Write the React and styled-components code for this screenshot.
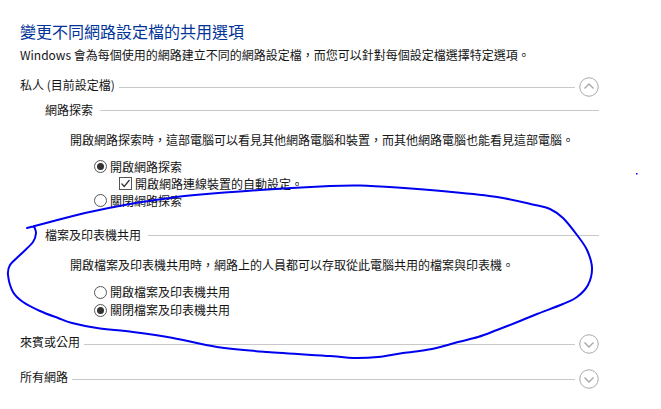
import React from "react";
import styled, { createGlobalStyle } from "styled-components";

const Global = createGlobalStyle`
  html, body { margin: 0; padding: 0; background: #fff; }
  body { font-family: "Noto Sans CJK TC", "Noto Sans", sans-serif; color: #141414; }
`;

const Page = styled.main`
  position: relative;
  width: 661px;
  height: 409px;
  overflow: hidden;
  box-sizing: border-box;
  padding: 20px 62px 0 20px;
  display: flex;
  flex-direction: column;
  font-size: 12px;
`;

const Title = styled.h1`
  margin: 0;
  height: 22px;
  font-size: 16px;
  line-height: 22px;
  font-weight: 400;
  color: #003399;
`;

const Intro = styled.p`
  margin: 4px 0 0;
  height: 18px;
  line-height: 18px;
  white-space: nowrap;
`;

const Header = styled.div`
  display: flex;
  align-items: center;
  height: 20px;
  margin-top: ${p => p.$top || 0}px;
  margin-left: ${p => p.$indent || 0}px;
  gap: ${p => p.$gap}px;
  white-space: nowrap;
`;

const HeaderLabel = styled.span`
  padding-bottom: ${p => p.$lift * 2}px;
`;

const Rule = styled.span`
  flex: 1;
  height: 1px;
  background: #c8c8c8;
`;

const Toggle = styled.svg`
  width: 20px;
  height: 20px;
  flex: none;
`;

const Body = styled.p`
  margin: ${p => p.$top}px 0 0 50px;
  height: 18px;
  line-height: 18px;
  white-space: nowrap;
`;

const Options = styled.div`
  display: flex;
  flex-direction: column;
  margin: ${p => p.$top}px 0 0 74px;
`;

const Option = styled.label`
  display: flex;
  align-items: center;
  gap: 3px;
  height: ${p => p.$height}px;
  line-height: 18px;
  margin-left: ${p => p.$indent || 0}px;
  white-space: nowrap;
`;

const RadioDot = styled.span`
  box-sizing: border-box;
  width: 13px;
  height: 13px;
  border-radius: 50%;
  border: 1px solid #555;
  background: #fff;
  flex: none;
  display: flex;
  align-items: center;
  justify-content: center;
  &::after {
    content: "";
    display: ${p => (p.$on ? "block" : "none")};
    width: 7px;
    height: 7px;
    border-radius: 50%;
    background: #333;
  }
`;

const CheckBox = styled.svg`
  width: 13px;
  height: 13px;
  flex: none;
`;

const Ink = styled.svg`
  position: absolute;
  left: 0;
  top: 0;
  width: 661px;
  height: 409px;
  pointer-events: none;
`;

const Chevron = ({ up }) => (
  <Toggle viewBox="0 0 20 20">
    <circle cx="10" cy="10" r="9.25" fill="#fff" stroke="#a8a8a8" strokeWidth="1" />
    <path d={up ? "M5.5 11.5 10 7l4.5 4.5" : "M5.5 8.5 10 13l4.5-4.5"} fill="none" stroke="#a8a8a8" strokeWidth="1.4" />
  </Toggle>
);

const Radio = ({ on, height, children }) => (
  <Option $height={height}>
    <RadioDot $on={on} />
    <span>{children}</span>
  </Option>
);

const stroke = [
  [27, 228], [50, 222], [85, 213], [130, 204], [170, 198], [195, 195], [260, 190], [330, 186],
  [360, 185.5], [397, 187.5], [447, 191.5], [497, 197], [535, 205], [550, 209], [563, 218],
  [577, 235], [587, 250], [592, 268], [588, 285], [577, 297], [563, 304], [537, 314], [520, 321],
  [497, 330], [478, 337], [458, 342], [432, 349], [403, 353], [378, 357], [353, 358], [330, 356],
  [267, 352], [217, 347], [173, 338], [133, 332], [97, 328], [72, 323], [58, 318], [40, 311],
  [23, 302], [13, 292], [8, 275], [10, 265], [20, 255], [33, 242], [36, 233], [34, 226],
];

const smoothPath = pts =>
  pts.reduce((d, p, i) => {
    if (i === 0) return `M${p[0]} ${p[1]}`;
    const a = pts[Math.max(i - 2, 0)];
    const b = pts[i - 1];
    const c = pts[Math.min(i + 1, pts.length - 1)];
    const c1 = [b[0] + (p[0] - a[0]) / 6, b[1] + (p[1] - a[1]) / 6];
    const c2 = [p[0] - (c[0] - b[0]) / 6, p[1] - (c[1] - b[1]) / 6];
    return `${d} C${c1[0]} ${c1[1]} ${c2[0]} ${c2[1]} ${p[0]} ${p[1]}`;
  }, "");

export default function App() {
  return (
    <Page>
      <Global />
      <Title>變更不同網路設定檔的共用選項</Title>
      <Intro>Windows 會為每個使用的網路建立不同的網路設定檔，而您可以針對每個設定檔選擇特定選項。</Intro>

      <Header $top={13} $gap={4}>
        <HeaderLabel $lift={3}>私人 (目前設定檔)</HeaderLabel>
        <Rule />
        <Chevron up />
      </Header>

      <Header $top={3} $indent={25} $gap={7}>
        <HeaderLabel $lift={1}>網路探索</HeaderLabel>
        <Rule />
      </Header>
      <Body $top={11}>開啟網路探索時，這部電腦可以看見其他網路電腦和裝置，而其他網路電腦也能看見這部電腦。</Body>
      <Options $top={9}>
        <Radio on height={17}>開啟網路探索</Radio>
        <Option $indent={25} $height={17}>
          <CheckBox viewBox="0 0 13 13">
            <rect x=".5" y=".5" width="12" height="12" fill="#fff" stroke="#555" />
            <path d="M2.5 6.5 5.2 9.5 10.5 3" fill="none" stroke="#333" strokeWidth="1.2" />
          </CheckBox>
          <span>開啟網路連線裝置的自動設定。</span>
        </Option>
        <Radio height={17}>關閉網路探索</Radio>
      </Options>

      <Header $top={16} $indent={25} $gap={7}>
        <HeaderLabel $lift={1}>檔案及印表機共用</HeaderLabel>
        <Rule />
      </Header>
      <Body $top={11}>開啟檔案及印表機共用時，網路上的人員都可以存取從此電腦共用的檔案與印表機。</Body>
      <Options $top={9}>
        <Radio height={18}>開啟檔案及印表機共用</Radio>
        <Radio on height={18}>關閉檔案及印表機共用</Radio>
      </Options>

      <Header $top={15} $gap={4}>
        <HeaderLabel $lift={3}>來賓或公用</HeaderLabel>
        <Rule />
        <Chevron />
      </Header>
      <Header $top={15} $gap={4}>
        <HeaderLabel $lift={3}>所有網路</HeaderLabel>
        <Rule />
        <Chevron />
      </Header>

      <Ink viewBox="0 0 661 409">
        <path d={smoothPath(stroke)} fill="none" stroke="#0000f0" strokeWidth="2" strokeLinecap="round" strokeLinejoin="round" />
        <rect x="636" y="173" width="1.5" height="1.5" fill="#0000f0" />
      </Ink>
    </Page>
  );
}
